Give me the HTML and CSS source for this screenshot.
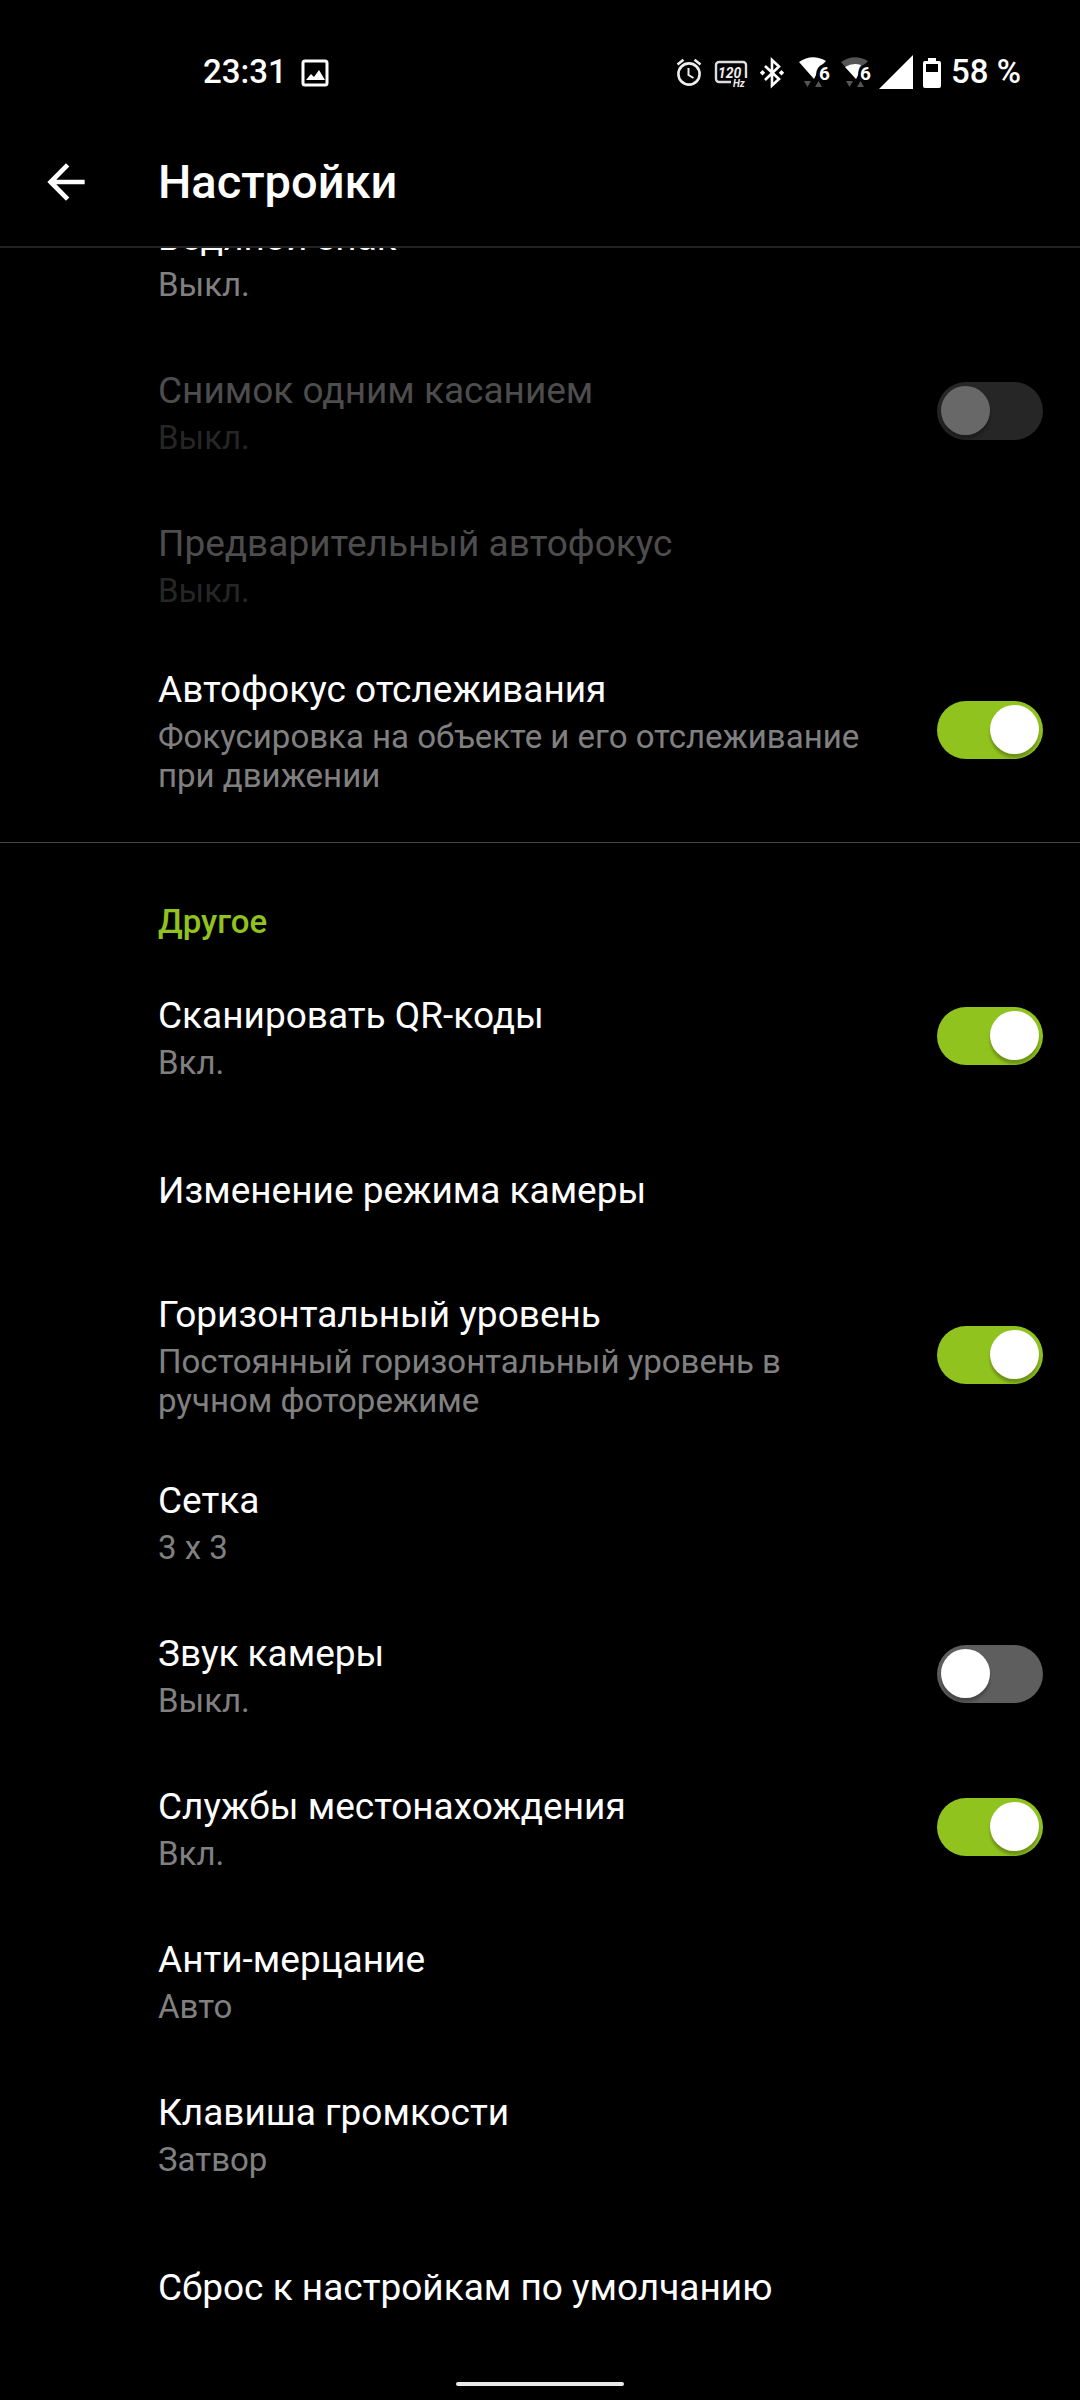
FILE: index.html
```
<!DOCTYPE html>
<html lang="ru">
<head>
    <meta charset="UTF-8">
    <meta name="viewport" content="width=device-width, initial-scale=1.0">
    <title>Настройки</title>
    <link rel="stylesheet" href="styles.css">
</head>
<body>
    <!-- Status bar -->
    <div class="status-bar">
        <div class="status-left">
            <span>23:31</span>
            <svg width="28" height="36" viewBox="0 0 28 36" aria-hidden="true">
                <rect x="2" y="7" width="24" height="24" rx="2" fill="none" stroke="#fff" stroke-width="3"/>
                <path d="M5 26l5-6 3 3 5-7 6 10z" fill="#fff"/>
            </svg>
        </div>
        <div class="status-right">
            <!-- Alarm -->
            <svg width="32" height="36" viewBox="0 0 32 36" fill="none" stroke="#eee" aria-hidden="true">
                <circle cx="16" cy="20" r="10.6" stroke-width="2.6"/>
                <path d="M15.5 14v7l5 3" stroke-width="2"/>
                <path d="M4.5 10.5l6-4.8M27.5 10.5l-6-4.8" stroke-width="2.6"/>
            </svg>
            <!-- 120 Hz -->
            <svg width="36" height="36" viewBox="0 0 36 36" aria-hidden="true">
                <path d="M18 28H6a3 3 0 0 1-3-3V11a3 3 0 0 1 3-3h24a3 3 0 0 1 3 3v13" fill="none" stroke="#ddd" stroke-width="2.4"/>
                <text class="hz-number" x="5" y="24">120</text>
                <text class="hz-unit" x="20" y="33">Hz</text>
            </svg>
            <!-- Bluetooth -->
            <svg width="32" height="36" viewBox="0 0 32 36" aria-hidden="true">
                <path d="M8 12l14 13-7 6.5V6l7 6.500L8 26" fill="none" stroke="#fff" stroke-width="2.6"/>
                <path d="M5.500 16l2.700 2.700-2.700 2.700-2.700-2.700zM24.500 16l2.700 2.700-2.700 2.700-2.700-2.700z" fill="#fff"/>
            </svg>
            <!-- Wi-Fi 6 -->
            <svg width="34" height="36" viewBox="0 0 34 36" aria-hidden="true">
                <path d="M2 8Q15-1 29 7l-3 3q-7 3-7 11l-2 4z" fill="#fff"/>
                <path d="M7 27h7l-3.500 6zM18 33h7l-3.500-6z" fill="#555"/>
                <text class="wifi-number" x="22" y="26">6</text>
            </svg>
            <svg width="32" height="36" viewBox="0 0 32 36" aria-hidden="true">
                <path d="M2 8Q15-1 29 7l-3 3q-7 3-7 11l-2 4z" fill="#555"/>
                <path d="M6 13q8-5 16-2-3 4-3 10l-2 4z" fill="#fff"/>
                <path d="M7 27h7l-3.500 6zM18 33h7l-3.500-6z" fill="#555"/>
                <text class="wifi-number" x="21" y="26">6</text>
            </svg>
            <!-- Signal -->
            <svg width="34" height="36" viewBox="0 0 34 36" aria-hidden="true">
                <path d="M34 1v34H0z" fill="#fff"/>
            </svg>
            <!-- Battery -->
            <svg width="22" height="36" viewBox="0 0 22 36" aria-hidden="true">
                <path fill-rule="evenodd" d="M7 4h8v3h3a2 2 0 0 1 2 2v23a2 2 0 0 1-2 2H4a2 2 0 0 1-2-2V9a2 2 0 0 1 2-2h3zM5 10v8h12v-8z" fill="#fff"/>
            </svg>
            <span>58 %</span>
        </div>
    </div>

    <!-- App bar -->
    <header class="app-bar">
        <button class="back-btn" type="button" aria-label="Назад">
            <svg width="56" height="56" viewBox="0 0 24 24" aria-hidden="true">
                <path d="M20 11H7.830l5.590-5.590L12 4l-8 8 8 8 1.410-1.410L7.830 13H20z" fill="#fff"/>
            </svg>
        </button>
        <h1>Настройки</h1>
    </header>

    <!-- Settings list, scrolled -->
    <main class="settings">
        <section class="group group-scrolled">
            <button class="row" type="button">
                <span class="row-text">
                    <span class="row-title">Водяной знак</span>
                    <span class="row-desc">Выкл.</span>
                </span>
            </button>
            <label class="row row-disabled">
                <span class="row-text">
                    <span class="row-title">Снимок одним касанием</span>
                    <span class="row-desc">Выкл.</span>
                </span>
                <input class="toggle" type="checkbox" disabled>
            </label>
            <button class="row row-disabled" type="button" disabled>
                <span class="row-text">
                    <span class="row-title">Предварительный автофокус</span>
                    <span class="row-desc">Выкл.</span>
                </span>
            </button>
            <label class="row">
                <span class="row-text">
                    <span class="row-title">Автофокус отслеживания</span>
                    <span class="row-desc">Фокусировка на объекте и его отслеживание при движении</span>
                </span>
                <input class="toggle" type="checkbox" checked>
            </label>
        </section>

        <section class="group">
            <h2>Другое</h2>
            <label class="row">
                <span class="row-text">
                    <span class="row-title">Сканировать QR-коды</span>
                    <span class="row-desc">Вкл.</span>
                </span>
                <input class="toggle" type="checkbox" checked>
            </label>
            <button class="row" type="button">
                <span class="row-text">
                    <span class="row-title">Изменение режима камеры</span>
                </span>
            </button>
            <label class="row">
                <span class="row-text">
                    <span class="row-title">Горизонтальный уровень</span>
                    <span class="row-desc">Постоянный горизонтальный уровень в ручном фоторежиме</span>
                </span>
                <input class="toggle" type="checkbox" checked>
            </label>
            <button class="row" type="button">
                <span class="row-text">
                    <span class="row-title">Сетка</span>
                    <span class="row-desc">3 x 3</span>
                </span>
            </button>
            <label class="row">
                <span class="row-text">
                    <span class="row-title">Звук камеры</span>
                    <span class="row-desc">Выкл.</span>
                </span>
                <input class="toggle" type="checkbox">
            </label>
            <label class="row">
                <span class="row-text">
                    <span class="row-title">Службы местонахождения</span>
                    <span class="row-desc">Вкл.</span>
                </span>
                <input class="toggle" type="checkbox" checked>
            </label>
            <button class="row" type="button">
                <span class="row-text">
                    <span class="row-title">Анти-мерцание</span>
                    <span class="row-desc">Авто</span>
                </span>
            </button>
            <button class="row" type="button">
                <span class="row-text">
                    <span class="row-title">Клавиша громкости</span>
                    <span class="row-desc">Затвор</span>
                </span>
            </button>
            <button class="row" type="button">
                <span class="row-text">
                    <span class="row-title">Сброс к настройкам по умолчанию</span>
                </span>
            </button>
        </section>
    </main>

    <!-- Gesture bar -->
    <div class="nav-bar">
        <div class="nav-handle"></div>
    </div>
</body>
</html>
```
FILE: styles.css
```
* {
    margin: 0;
    padding: 0;
    box-sizing: border-box;
}

body {
    min-height: 100vh;
    display: flex;
    flex-direction: column;
    background: #000;
    color: #fff;
    font-family: Roboto, sans-serif;
}

svg {
    display: block;
    flex-shrink: 0;
}

button {
    border: none;
    background: none;
    color: inherit;
    font: inherit;
    cursor: pointer;
}

/* Status bar */
.status-bar {
    display: flex;
    justify-content: space-between;
    align-items: center;
    padding: 52px 59px 26px 203px;
    font-size: 33px;
    font-weight: 500;
    line-height: 40px;
}

.status-left {
    display: flex;
    align-items: center;
    gap: 14px;
}

.status-right {
    display: flex;
    align-items: center;
    gap: 8px;
}

.hz-number {
    font-size: 14px;
    font-weight: 700;
    font-style: italic;
    fill: #eee;
}

.hz-unit {
    font-size: 10px;
    font-weight: 700;
    font-style: italic;
    fill: #eee;
}

.wifi-number {
    font-size: 19px;
    font-weight: 700;
    fill: #fff;
}

/* App bar */
.app-bar {
    display: flex;
    align-items: center;
    height: 130px;
    padding-left: 38px;
    border-bottom: 2px solid #222;
}

.back-btn {
    width: 120px;
}

.app-bar h1 {
    font-size: 47px;
    font-weight: 500;
    line-height: 56px;
}

/* Settings list */
.settings {
    flex: 1;
    overflow: hidden;
}

.group {
    padding-bottom: 23px;
}

.group-scrolled {
    margin-top: -67px;
}

.group:last-child {
    padding-bottom: 0;
    border-top: 1px solid #444;
}

.group h2 {
    padding: 59px 37px 17px 158px;
    color: #91c31e;
    font-size: 33px;
    font-weight: 500;
    line-height: 40px;
}

.row {
    display: flex;
    align-items: center;
    gap: 48px;
    width: 100%;
    min-height: 153px;
    padding: 24px 37px 24px 158px;
    text-align: left;
    cursor: pointer;
}

.row-text {
    flex: 1;
    display: flex;
    flex-direction: column;
    gap: 5px;
    padding-top: 4px;
}

.row-title {
    font-size: 37px;
    line-height: 44px;
}

.row-desc {
    color: #808080;
    font-size: 33px;
    line-height: 39px;
}

.row-disabled {
    cursor: default;
}

.row-disabled .row-title {
    color: #4d4d4d;
}

.row-disabled .row-desc {
    color: #262626;
}

/* Toggle switch */
.toggle {
    appearance: none;
    display: flex;
    flex-shrink: 0;
    width: 106px;
    height: 58px;
    padding: 4px;
    border-radius: 29px;
    background: #5e5e5e;
    cursor: pointer;
}

.toggle::before {
    content: "";
    width: 49px;
    height: 49px;
    border-radius: 50%;
    background: #fff;
    box-shadow: 0 4px 3px rgba(0, 0, 0, 0.25);
}

.toggle:checked {
    justify-content: flex-end;
    background: #91c31e;
}

.toggle:disabled {
    background: #262626;
    cursor: default;
}

.toggle:disabled::before {
    background: #686868;
}

/* Gesture bar */
.nav-bar {
    display: flex;
    justify-content: center;
    align-items: center;
    height: 32px;
}

.nav-handle {
    width: 168px;
    height: 4px;
    border-radius: 2px;
    background: #e9ebe6;
}
```
